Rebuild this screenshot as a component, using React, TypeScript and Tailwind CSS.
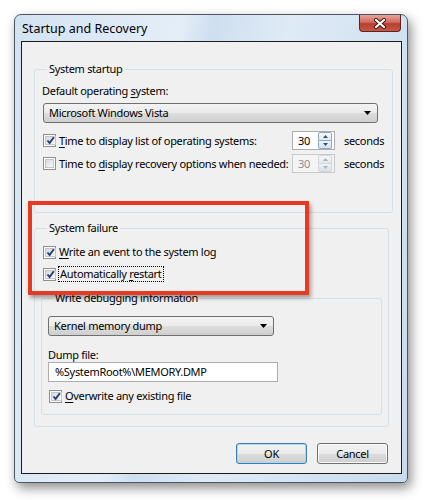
import React from "react";

const font = { fontFamily: '"Noto Sans", "Open Sans", sans-serif' };

function CheckBox({ checked }: { checked: boolean }) {
  return (
    <span className="w-[13px] h-[13px] shrink-0 border border-[#8e8f8f] bg-white p-[1px] flex">
      <span className="flex-1 border border-[#c4c6c9] bg-gradient-to-br from-[#d8dadc] to-[#f8f8f8] flex items-center justify-center">
        {checked && (
          <svg width="9" height="9" viewBox="0 0 9 9">
            <path d="M1.5 4.5 L3.6 7 L7.8 1.2" fill="none" stroke="#1f3a83" strokeWidth="1.9" />
          </svg>
        )}
      </span>
    </span>
  );
}

// letter with access-key underline
function U({ children }: { children: React.ReactNode }) {
  return <span className="underline underline-offset-[2px]">{children}</span>;
}

function Dropdown({ text, width }: { text: string; width: string }) {
  return (
    <div
      className={`${width} h-[20px] rounded-[3px] border border-[#707070] bg-[linear-gradient(to_bottom,#f3f3f3_0%,#ebebeb_50%,#dddddd_51%,#cfcfcf_100%)] flex items-center pl-[5px] pr-[6px]`}
    >
      <span className="flex-1 leading-[16px]">{text}</span>
      <svg width="7" height="4" viewBox="0 0 7 4">
        <path d="M0 0 H7 L3.5 4 Z" fill="#000" />
      </svg>
    </div>
  );
}

function Spin({ disabled }: { disabled?: boolean }) {
  return (
    <div
      className={`w-[43px] h-[19px] border ${disabled ? "border-[#c9c9c9] bg-[#f4f4f4] text-[#8d8d8d]" : "border-[#abadb3] bg-white text-black"} flex items-center`}
    >
      <span className="flex-1 pl-[5px] leading-[16px]">30</span>
      <div className="w-[14px] h-[17px] mr-[2px] flex flex-col">
        <div
          className={`flex-1 border ${disabled ? "border-[#d6d6d6]" : "border-[#8fa6c0]"} rounded-t-[2px] bg-gradient-to-b from-[#f5f8fb] to-[#dfe8f1] flex items-center justify-center`}
        >
          <svg width="5" height="3" viewBox="0 0 5 3">
            <path d="M0 3 H5 L2.5 0 Z" fill={disabled ? "#b0b0b0" : "#3a4f6a"} />
          </svg>
        </div>
        <div
          className={`flex-1 border border-t-0 ${disabled ? "border-[#d6d6d6]" : "border-[#8fa6c0]"} rounded-b-[2px] bg-gradient-to-b from-[#eef3f8] to-[#d5e1ec] flex items-center justify-center`}
        >
          <svg width="5" height="3" viewBox="0 0 5 3">
            <path d="M0 0 H5 L2.5 3 Z" fill={disabled ? "#b0b0b0" : "#3a4f6a"} />
          </svg>
        </div>
      </div>
    </div>
  );
}

function Button({ label, isDefault }: { label: string; isDefault?: boolean }) {
  return (
    <button
      className={`w-[71px] h-[21px] rounded-[3px] border ${isDefault ? "border-[#3c7fb1] shadow-[inset_0_0_0_1px_#a8d8eb]" : "border-[#707070] shadow-[inset_0_0_0_1px_#fbfbfb]"} bg-[linear-gradient(to_bottom,#f2f2f2_0%,#ebebeb_50%,#dddddd_51%,#cfcfcf_100%)] leading-[16px] text-black`}
    >
      {label}
    </button>
  );
}

export default function App() {
  return (
    <div className="w-[426px] h-[500px] bg-white pl-[14px] pt-[14px] text-[11px] tracking-[-0.3px] text-black" style={font}>
      {/* Window frame */}
      <div className="w-[394px] h-[469px] rounded-t-[7px] rounded-b-[5px] border border-[#4a5866] bg-[linear-gradient(100deg,#d3e2f1_0%,#e4eef8_35%,#cfdff0_42%,#dfeaf6_58%,#c9dbee_100%)] shadow-[3px_5px_12px_rgba(0,0,0,0.45)] flex flex-col pl-[6px] pr-[5px] pb-[8px]">
        {/* Title bar */}
        <div className="h-[26px] flex items-start justify-between">
          <span className="pl-[1px] pt-[6px] leading-[16px] text-[12.5px] tracking-normal">Startup and Recovery</span>
          <div className="mr-[1px] w-[42px] h-[17px] rounded-b-[4px] border border-t-0 border-[#5b2420] bg-[linear-gradient(to_bottom,#e8a59a_0%,#d2695d_45%,#b83d2f_55%,#c45a45_100%)] flex items-center justify-center">
            <svg width="14" height="11" viewBox="0 0 14 11">
              <path d="M3 2 L11 9 M11 2 L3 9" stroke="#3b1712" strokeWidth="4" strokeLinecap="round" />
              <path d="M3 2 L11 9 M11 2 L3 9" stroke="#ffffff" strokeWidth="2.2" strokeLinecap="round" />
            </svg>
          </div>
        </div>

        {/* Client area */}
        <div className="relative flex-1 border border-[#1b1b1b] bg-[#f0f0f0] flex flex-col px-[12px] pt-[19px]">
          {/* System startup */}
          <fieldset className="border border-[#d5dfe5] rounded-[3px] pl-[7px] pr-[8px] h-[152px]">
            <legend className="ml-[5px] px-[2px] leading-[16px]">System startup</legend>
            <div className="mt-[6px] leading-[16px]">
              Default operating <U>s</U>ystem:
            </div>
            <div className="mt-[4px] pl-[1px]">
              <Dropdown text="Microsoft Windows Vista" width="w-[335px]" />
            </div>
            <div className="mt-[8px] h-[19px] pl-[1px] flex items-center">
              <CheckBox checked />
              <span className="ml-[3px] w-[233px] leading-[16px] whitespace-nowrap">
                <U>T</U>ime to display list of operating systems:
              </span>
              <Spin />
              <span className="ml-[9px] leading-[16px]">seconds</span>
            </div>
            <div className="mt-[4px] h-[19px] pl-[1px] flex items-center">
              <CheckBox checked={false} />
              <span className="ml-[3px] w-[233px] leading-[16px] whitespace-nowrap">
                Time to <U>d</U>isplay recovery options when needed:
              </span>
              <Spin disabled />
              <span className="ml-[9px] leading-[16px]">seconds</span>
            </div>
          </fieldset>

          {/* System failure */}
          <fieldset className="mt-[7px] border border-[#d5dfe5] rounded-[3px] pl-[7px] pr-[6px] pb-[11px]">
            <legend className="ml-[5px] px-[2px] leading-[16px]">System failure</legend>
            <div className="mt-[8px] h-[16px] pl-[1px] flex items-center">
              <CheckBox checked />
              <span className="ml-[3px] leading-[16px]">
                <U>W</U>rite an event to the system log
              </span>
            </div>
            <div className="mt-[6px] h-[16px] pl-[1px] flex items-center">
              <CheckBox checked />
              <span className="ml-[2px] px-[1px] leading-[14px] border border-dotted border-black">
                Automatically <U>r</U>estart
              </span>
            </div>

            {/* Write debugging information */}
            <fieldset className="mt-[8px] ml-[-1px] border border-[#d5dfe5] rounded-[3px] pl-[6px] pr-[6px] pb-[10px]">
              <legend className="ml-[5px] px-[2px] leading-[16px]">Write debugging information</legend>
              <div className="mt-[10px]">
                <Dropdown text="Kernel memory dump" width="w-[226px]" />
              </div>
              <div className="mt-[13px] leading-[12px]">Dump file:</div>
              <div className="mt-[1px] w-[230px] h-[20px] border border-[#abadb3] bg-white flex items-center pl-[6px] leading-[16px]">
                %SystemRoot%\MEMORY.DMP
              </div>
              <div className="mt-[6px] h-[16px] pl-[1px] flex items-center">
                <CheckBox checked />
                <span className="ml-[3px] leading-[16px]">
                  <U>O</U>verwrite any existing file
                </span>
              </div>
            </fieldset>
          </fieldset>

          {/* Buttons */}
          <div className="mt-[16px] flex justify-end gap-[10px] pr-[1px]">
            <Button label="OK" isDefault />
            <Button label="Cancel" />
          </div>

          {/* Red annotation box */}
          <div className="absolute left-[6px] top-[159px] w-[281px] h-[94px] border-[4px] border-[#e83a22] shadow-[2px_3px_4px_rgba(0,0,0,0.35)]" />
        </div>
      </div>
    </div>
  );
}
